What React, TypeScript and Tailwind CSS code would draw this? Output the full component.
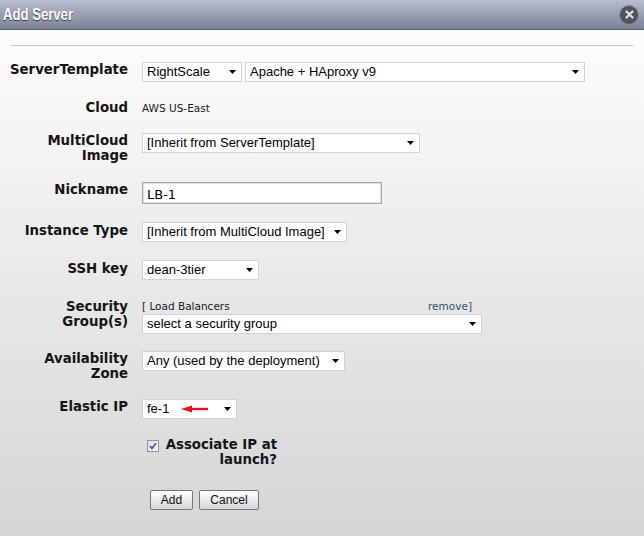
import type { ReactNode } from "react";

const labelFont = "font-['DejaVu_Sans',Verdana,sans-serif]";

function Arrow() {
  return (
    <svg width="7" height="4" viewBox="0 0 7 4" className="shrink-0">
      <path d="M0 0h7L3.5 4z" fill="#000" />
    </svg>
  );
}

function Select({ className, children }: { className: string; children: ReactNode }) {
  return (
    <div
      className={`flex h-[20px] items-center justify-between border border-[#d2d2d2] bg-white pl-[4px] pr-[5px] font-['Liberation_Sans',Arial,sans-serif] text-[13px] leading-[18px] whitespace-nowrap text-black ${className}`}
    >
      <div className="flex items-center">{children}</div>
      <Arrow />
    </div>
  );
}

function Row({ label, className, children }: { label: ReactNode; className: string; children: ReactNode }) {
  return (
    <div className={`flex ${className}`}>
      <div
        className={`w-[128px] shrink-0 text-right ${labelFont} text-[13.3px] leading-[15px] font-bold text-[#151515]`}
      >
        {label}
      </div>
      <div className="ml-[14px]">{children}</div>
    </div>
  );
}

export default function App() {
  return (
    <div className="flex h-[536px] w-[644px] flex-col overflow-hidden">
      {/* Title bar */}
      <div className="flex h-[30px] shrink-0 items-center justify-between border-b border-[#5b6272] bg-linear-to-b from-[#b7bfcd] to-[#7a8296] pr-[5px] pl-[3px]">
        <span className="origin-left scale-x-[0.82] pt-[1px] font-['Liberation_Sans',Arial,sans-serif] text-[16px] font-bold text-white [text-shadow:0_1px_1px_rgba(0,0,0,0.65)]">
          Add Server
        </span>
        <div className="flex h-[20px] w-[20px] items-center justify-center rounded-full border border-[#8a909b] bg-[#4f545d]">
          <svg width="9" height="9" viewBox="0 0 9 9">
            <path d="M1.5 1.5l6 6M7.5 1.5l-6 6" stroke="#e4e4e4" strokeWidth="2.2" strokeLinecap="round" />
          </svg>
        </div>
      </div>

      {/* Body */}
      <div className="flex-1 bg-linear-to-b from-[#fdfdfd] to-[#d5d5d5] pt-[15px]">
        <div className="mx-[11px] h-px bg-[#c6c6c6]" />

        <div className="mt-[16px]">
          <Row label="ServerTemplate" className="h-[38px]">
            <div className="flex gap-[3px]">
              <Select className="w-[100px]">RightScale</Select>
              <Select className="w-[340px]">Apache + HAproxy v9</Select>
            </div>
          </Row>

          <div className="flex h-[33px] items-baseline">
            <div className={`w-[128px] shrink-0 text-right ${labelFont} text-[13.3px] leading-[15px] font-bold text-[#151515]`}>
              Cloud
            </div>
            <div className={`ml-[14px] ${labelFont} text-[10.5px] leading-[15px] text-[#1a1a1a]`}>AWS US-East</div>
          </div>

          <Row
            label={
              <>
                MultiCloud
                <br />
                Image
              </>
            }
            className="h-[49px]"
          >
            <Select className="w-[278px]">[Inherit from ServerTemplate]</Select>
          </Row>

          <Row label="Nickname" className="h-[40px]">
            <div
              className={`h-[22px] w-[240px] border border-[#a9a9a9] bg-white pt-[4px] pl-[4px] shadow-[inset_0_0_0_1px_#dedede] ${labelFont} text-[13px] leading-[15px] text-black`}
            >
              LB-1
            </div>
          </Row>

          <Row label="Instance Type" className="h-[38px] pt-[1px]">
            <div className="-mt-[1px]">
              <Select className="w-[205px]">[Inherit from MultiCloud Image]</Select>
            </div>
          </Row>

          <Row label="SSH key" className="h-[39px] pt-[1px]">
            <div className="-mt-[1px]">
              <Select className="w-[117px]">dean-3tier</Select>
            </div>
          </Row>

          <Row
            label={
              <>
                Security
                <br />
                Group(s)
              </>
            }
            className="h-[52px]"
          >
            <div className="w-[340px]">
              <div className={`flex h-[15px] justify-between pr-[10px] ${labelFont} text-[10.5px] leading-[15px]`}>
                <span className="text-[#1a1a1a]">[ Load Balancers</span>
                <span className="text-[#35506e]">remove]</span>
              </div>
              <Select className="w-[340px]">select a security group</Select>
            </div>
          </Row>

          <Row
            label={
              <>
                Availability
                <br />
                Zone
              </>
            }
            className="h-[48px]"
          >
            <Select className="w-[203px]">Any (used by the deployment)</Select>
          </Row>

          <Row label="Elastic IP" className="h-[38px]">
            <Select className="w-[95px]">
              <span>fe-1</span>
              <svg width="28" height="8" viewBox="0 0 28 8" className="ml-[12px]">
                <path d="M9 4H27" stroke="#e8141b" strokeWidth="2.4" />
                <path d="M0 4L11 0.5V7.5z" fill="#e8141b" />
              </svg>
            </Select>
          </Row>

          {/* Associate IP checkbox */}
          <div className="flex h-[53px] items-start pl-[147px]">
            <svg width="12" height="12" viewBox="0 0 12 12" className="mt-[3px] shrink-0">
              <defs>
                <linearGradient id="cb" x1="0" y1="0" x2="1" y2="1">
                  <stop offset="0" stopColor="#d9dbe0" />
                  <stop offset="1" stopColor="#f8f8f8" />
                </linearGradient>
              </defs>
              <rect x="0.5" y="0.5" width="11" height="11" fill="url(#cb)" stroke="#8c95a8" />
              <path d="M3 6l2 2.4L9 3.2" fill="none" stroke="#3f5293" strokeWidth="1.6" />
            </svg>
            <div className={`ml-[6px] w-[112px] text-right ${labelFont} text-[13.3px] leading-[15px] font-bold text-[#151515]`}>
              Associate IP at
              <br />
              launch?
            </div>
          </div>

          {/* Buttons */}
          <div className="flex gap-[6px] pl-[150px] font-['Liberation_Sans',Arial,sans-serif] text-[12px] text-[#111]">
            <button className="h-[20px] w-[43px] rounded-[2px] border border-[#777] bg-linear-to-b from-white to-[#d6d6d6] leading-[18px]">
              Add
            </button>
            <button className="h-[20px] w-[60px] rounded-[2px] border border-[#777] bg-linear-to-b from-white to-[#d6d6d6] leading-[18px]">
              Cancel
            </button>
          </div>
        </div>
      </div>
    </div>
  );
}
